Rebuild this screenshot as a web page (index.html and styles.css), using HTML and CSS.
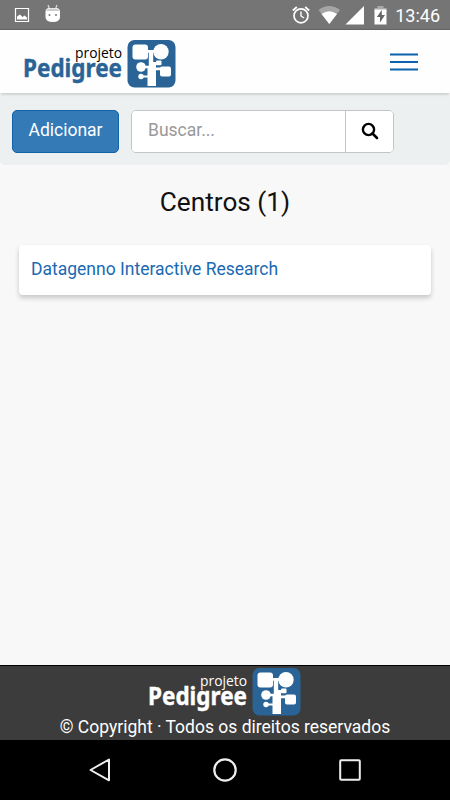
FILE: index.html
```html
<!DOCTYPE html>
<html lang="pt-BR">
<head>
    <meta charset="UTF-8">
    <meta name="viewport" content="width=device-width, initial-scale=1.0">
    <title>Projeto Pedigree</title>
    <link rel="stylesheet" href="styles.css">
</head>
<body>

    <div class="status-bar">
        <svg class="status-left" width="50" height="30" viewBox="0 0 50 30">
            <path d="M1.500 8.500h13v13h-13z" fill="none" stroke="#fff" stroke-width="1.200"/>
            <path d="M3 19.500v-3l3-2 2.500 2.500 2-1.500 2.500 2v2z" fill="#fff"/>
            <path d="M34 5l1.500 4M43 5l-1.500 4" stroke="#ddd" stroke-width="1.200"/>
            <path d="M31.500 12q0-4 4-4h6.500q4 0 4 4v5q0 5-7.200 5t-7.300-5z" fill="#fff"/>
            <path d="M32 11q1-2.500 4-2.500h5.500q3 0 4 2.500z" fill="#ccc"/>
            <circle cx="35.500" cy="15" r="1" fill="#777"/>
            <circle cx="42" cy="15" r="1" fill="#777"/>
        </svg>
        <div class="status-right">
            <svg width="98" height="30" viewBox="290 0 98 30">
                <circle cx="301" cy="15.800" r="7" fill="none" stroke="#fff" stroke-width="1.700"/>
                <path d="M292.800 10.500l4-3.500M309.200 10.500l-4-3.500" stroke="#fff" stroke-width="1.700"/>
                <path d="M301 11.500v4.500l3 2" fill="none" stroke="#fff" stroke-width="1.400"/>
                <path d="M318.500 10q10.800-8 21.500 0L329.300 24z" fill="#a5a5a5"/>
                <path d="M321.500 14q7.800-5.500 15.500 0L329.300 24z" fill="#fff"/>
                <path d="M364 6v18.500h-18.500z" fill="#fff"/>
                <path d="M374.500 8h3V6h6v2h3v4h-12z" fill="#aaa"/>
                <path d="M374.500 9.500h12v15h-12z" fill="#fff"/>
                <path d="M381.800 10l-5 7h3.200v5.500l5-7.500h-3.200z" fill="#666"/>
            </svg>
            <span class="clock">13:46</span>
        </div>
    </div>

    <header class="navbar">
        <a href="#" class="brand">
            <svg class="logo" width="152" height="48" viewBox="0 0 152 48">
                <text class="logo-small" x="51" y="18" textLength="47" lengthAdjust="spacingAndGlyphs">projeto</text>
                <text class="logo-big" x="-1" y="37" textLength="99" lengthAdjust="spacingAndGlyphs">Pedigree</text>
                <g id="tree" transform="translate(103.500 0)">
                    <rect width="48" height="47.500" rx="7" fill="#2a6496"/>
                    <g fill="#fff">
                        <rect x="5" y="4.500" width="15.500" height="15" rx="3"/>
                        <circle cx="33.500" cy="11.700" r="7.700"/>
                        <path d="M19 10h9v2.700h-2.300V22H30v3h-1.500v2.500H34v2.700h-5.500V46H20v-8.600h-5.500v-1.800H20v-7.400h-4v-2.400h5.300V12.700H19z"/>
                        <circle cx="13.500" cy="27" r="4.800"/>
                        <circle cx="13.500" cy="36.500" r="2.700"/>
                        <rect x="28.500" y="20.500" width="5.500" height="4.800" rx="1"/>
                        <rect x="32.500" y="26.500" width="11" height="10" rx="2"/>
                    </g>
                </g>
            </svg>
        </a>
        <button class="menu" aria-label="Menu">
            <svg width="28" height="18" viewBox="0 0 28 18">
                <path d="M0 1.500h28M0 9h28M0 16.500h28" stroke="#0b62ad" stroke-width="2.200"/>
            </svg>
        </button>
    </header>

    <div class="toolbar">
        <button class="btn-add">Adicionar</button>
        <form class="search">
            <input type="text" placeholder="Buscar...">
            <button type="button" aria-label="Buscar">
                <svg width="18" height="18" viewBox="0 0 18 18">
                    <circle cx="7.500" cy="7.500" r="5.600" fill="none" stroke="#000" stroke-width="2.400"/>
                    <path d="M11.500 11.500l4.500 4.500" stroke="#000" stroke-width="2.600" stroke-linecap="round"/>
                </svg>
            </button>
        </form>
    </div>

    <main>
        <h1>Centros (1)</h1>
        <a href="#" class="card">Datagenno Interactive Research</a>
    </main>

    <footer>
        <svg class="logo logo-white" width="152" height="48" viewBox="0 0 152 48">
            <text class="logo-small" x="51" y="18" textLength="47" lengthAdjust="spacingAndGlyphs">projeto</text>
            <text class="logo-big" x="-1" y="37" textLength="99" lengthAdjust="spacingAndGlyphs">Pedigree</text>
            <use href="#tree"/>
        </svg>
        <p>© Copyright · Todos os direitos reservados</p>
    </footer>

    <div class="android-nav">
        <svg width="22" height="26" viewBox="0 0 22 26">
            <path d="M20 2.500v20.800L1.500 13z" fill="none" stroke="#eee" stroke-width="2" stroke-linejoin="round"/>
        </svg>
        <svg width="26" height="26" viewBox="0 0 26 26">
            <circle cx="13" cy="13" r="10.700" fill="none" stroke="#eee" stroke-width="2.200"/>
        </svg>
        <svg width="22" height="26" viewBox="0 0 22 26">
            <rect x="1.200" y="3.200" width="19.600" height="19.600" rx="1" fill="none" stroke="#eee" stroke-width="2"/>
        </svg>
    </div>

</body>
</html>
```

FILE: styles.css
```css
* {
    box-sizing: border-box;
}

body {
    display: flex;
    flex-direction: column;
    height: 100vh;
    margin: 0;
    background-color: #f8f8f8;
    font-family: Roboto, sans-serif;
    font-size: 17.5px;
    color: #111;
}

button {
    font-family: inherit;
    font-size: inherit;
    cursor: pointer;
}

svg {
    display: block;
    flex: none;
}

/* Android status bar */
.status-bar {
    display: flex;
    justify-content: space-between;
    height: 30px;
    padding: 0 10px 0 14px;
    background-color: #757575;
    border-bottom: 1px solid #686868;
}

.status-right {
    display: flex;
    align-items: center;
    gap: 7px;
}

.clock {
    font-size: 18px;
    line-height: 30px;
    color: #fff;
    margin-top: 2px;
}

/* Header */
.navbar {
    display: flex;
    justify-content: space-between;
    height: 63px;
    padding: 10px 32px 0 23.5px;
    background-color: #fefefe;
    box-shadow: 0 1px 3px rgba(0, 0, 0, 0.2);
    z-index: 1;
}

.logo {
    overflow: visible;
}

.logo-small {
    font-family: "Open Sans", sans-serif;
    font-size: 14px;
    font-weight: 400;
    fill: #000;
}

.logo-big {
    font-family: "Noto Sans", sans-serif;
    font-size: 25px;
    font-weight: 700;
    fill: #2a6496;
    stroke: #2a6496;
    stroke-width: 0.4px;
}

.logo-white text {
    fill: #fff;
}

.logo-white .logo-big {
    stroke: #fff;
}

.menu {
    height: 18px;
    margin-top: 12.5px;
    padding: 0;
    border: none;
    background: none;
}

/* Toolbar */
.toolbar {
    display: flex;
    gap: 12px;
    height: 72px;
    padding: 17px 12px;
    background-color: #ecf0f1;
    border-radius: 5px;
}

.btn-add {
    width: 107px;
    height: 43px;
    padding: 0 0 3px;
    border: 1px solid #1262a8;
    border-radius: 5px;
    background-color: #337ab7;
    color: #fff;
}

.search {
    display: flex;
    width: 263px;
    height: 43px;
    border: 1px solid #c4c4c4;
    border-radius: 5px;
    background-color: #fff;
    overflow: hidden;
}

.search input {
    width: 214px;
    padding: 0 16px 3px;
    border: none;
    border-right: 1px solid #c4c4c4;
    font-family: inherit;
    font-size: inherit;
}

.search input::placeholder {
    color: #999;
}

.search button {
    display: flex;
    flex: 1;
    align-items: center;
    justify-content: center;
    padding: 0 0 1px;
    border: none;
    background: #fff;
}

/* Content */
main {
    flex: 1;
    padding: 0 19px;
}

h1 {
    margin: 21px 0 27px;
    font-size: 26.2px;
    font-weight: 400;
    line-height: 32px;
    text-align: center;
}

.card {
    display: block;
    height: 50px;
    padding: 0 12px;
    border-radius: 4px;
    background-color: #fff;
    box-shadow: 0 3px 5px rgba(0, 0, 0, 0.2);
    color: #1a69b3;
    line-height: 48px;
    text-decoration: none;
}

footer {
    height: 75px;
    padding-top: 2px;
    background-color: #3c3c3c;
    border-top: 1px solid #000;
    color: #fff;
    text-align: center;
}

footer .logo {
    margin: 0 auto;
}

footer p {
    margin: 0;
    line-height: 22px;
}

.android-nav {
    display: flex;
    align-items: center;
    justify-content: space-between;
    height: 60px;
    padding: 0 89px;
    background-color: #000;
}
```
